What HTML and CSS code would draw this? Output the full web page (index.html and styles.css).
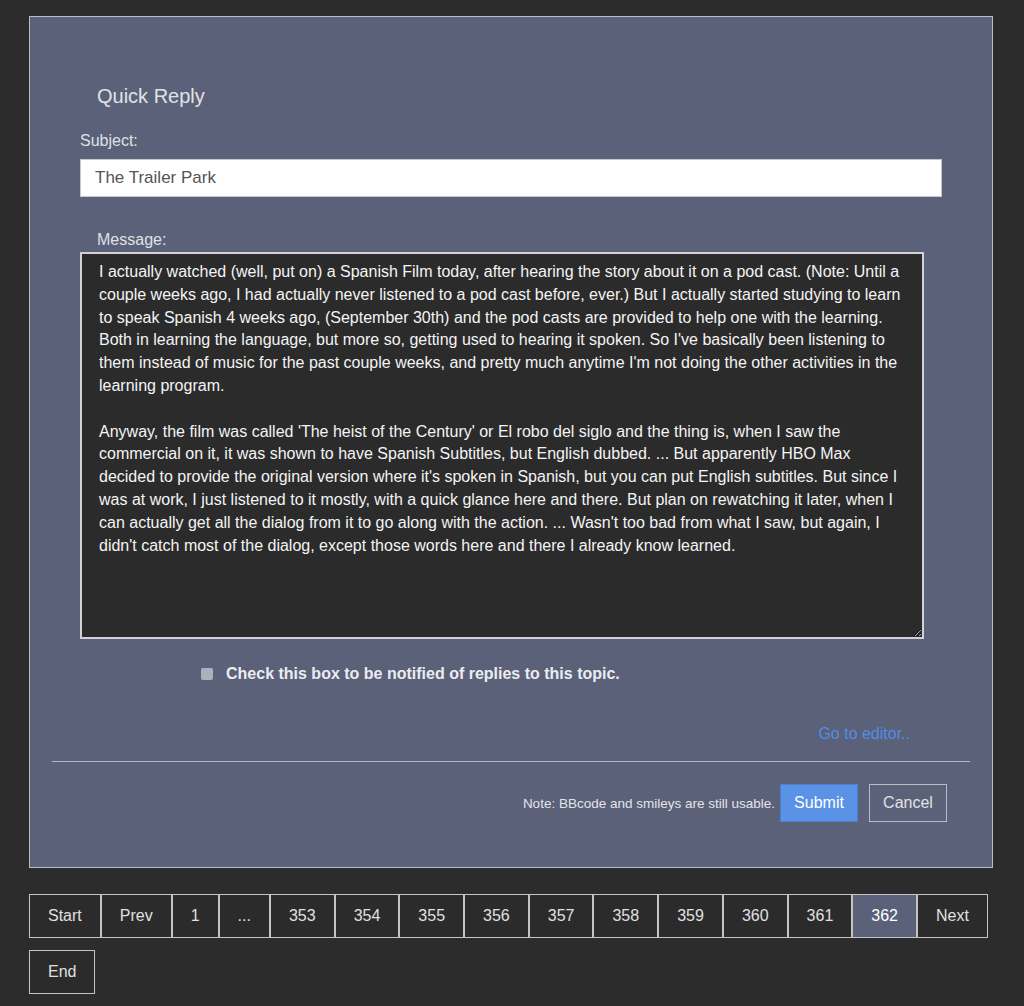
FILE: index.html
```html
<!DOCTYPE html>
<html lang="en">
<head>
  <meta charset="UTF-8">
  <meta name="viewport" content="width=device-width, initial-scale=1.0">
  <title>Quick Reply</title>
  <link rel="stylesheet" href="styles.css">
</head>
<body>
  <form class="reply-panel">
    <h2 class="reply-title">Quick Reply</h2>

    <label class="field-label subject-label" for="subject">Subject:</label>
    <input class="subject-input" id="subject" type="text" value="The Trailer Park">

    <label class="field-label message-label" for="message">Message:</label>
    <textarea class="message-box" id="message">I actually watched (well, put on) a Spanish Film today, after hearing the story about it on a pod cast. (Note: Until a couple weeks ago, I had actually never listened to a pod cast before, ever.) But I actually started studying to learn to speak Spanish 4 weeks ago, (September 30th) and the pod casts are provided to help one with the learning. Both in learning the language, but more so, getting used to hearing it spoken. So I've basically been listening to them instead of music for the past couple weeks, and pretty much anytime I'm not doing the other activities in the learning program.

Anyway, the film was called 'The heist of the Century' or El robo del siglo and the thing is, when I saw the commercial on it, it was shown to have Spanish Subtitles, but English dubbed. ... But apparently HBO Max decided to provide the original version where it's spoken in Spanish, but you can put English subtitles. But since I was at work, I just listened to it mostly, with a quick glance here and there. But plan on rewatching it later, when I can actually get all the dialog from it to go along with the action. ... Wasn't too bad from what I saw, but again, I didn't catch most of the dialog, except those words here and there I already know learned.</textarea>

    <label class="notify-row">
      <input class="notify-check" type="checkbox">
      <span>Check this box to be notified of replies to this topic.</span>
    </label>

    <div class="editor-link-row">
      <a class="editor-link" href="#">Go to editor..</a>
    </div>

    <hr class="divider">

    <div class="form-actions">
      <span class="bbcode-note">Note: BBcode and smileys are still usable.</span>
      <button class="btn btn-submit" type="button">Submit</button>
      <button class="btn btn-cancel" type="button">Cancel</button>
    </div>
  </form>

  <nav class="pagination">
    <a class="page-link" href="#">Start</a>
    <a class="page-link" href="#">Prev</a>
    <a class="page-link" href="#">1</a>
    <a class="page-link" href="#">...</a>
    <a class="page-link" href="#">353</a>
    <a class="page-link" href="#">354</a>
    <a class="page-link" href="#">355</a>
    <a class="page-link" href="#">356</a>
    <a class="page-link" href="#">357</a>
    <a class="page-link" href="#">358</a>
    <a class="page-link" href="#">359</a>
    <a class="page-link" href="#">360</a>
    <a class="page-link" href="#">361</a>
    <a class="page-link current" href="#">362</a>
    <a class="page-link" href="#">Next</a>
    <a class="page-link" href="#">End</a>
  </nav>
</body>
</html>
```

FILE: styles.css
```css
* {
  margin: 0;
  padding: 0;
  box-sizing: border-box;
  font-family: 'Liberation Sans', Helvetica, Arial, sans-serif;
}

body {
  background: #2c2c2c;
  padding: 16px 31px 0 29px;
  min-height: 100vh;
}

.reply-panel {
  display: flex;
  flex-direction: column;
  background: #5a6179;
  border: 1px solid #b9bcc4;
  padding: 67px 22px 45px;
}

.reply-title {
  margin-left: 45px;
  font-size: 20px;
  line-height: 24px;
  font-weight: normal;
  color: #e2e2e6;
}

.field-label {
  font-size: 16px;
  line-height: 18px;
  color: #e0e0e4;
}

.subject-label {
  margin: 24px 0 0 28px;
}

.subject-input {
  margin: 9px 0 0 28px;
  width: 862px;
  height: 38px;
  border: 1px solid #c8c8c8;
  background: #fff;
  padding: 0 14px;
  font-size: 17px;
  color: #555;
  outline: none;
}

.message-label {
  margin: 34px 0 0 45px;
}

.message-box {
  margin: 3px 0 0 28px;
  width: 844px;
  height: 387px;
  background: #2b2b2b;
  border: 2px solid #d2d2d6;
  padding: 7px 12px 6px 17px;
  font-size: 16px;
  line-height: 22.8px;
  color: #f4f4f4;
  outline: none;
}

.notify-row {
  margin: 26px 0 0 149px;
  display: flex;
  align-items: center;
  gap: 13px;
  font-size: 16px;
  line-height: 18px;
  font-weight: bold;
  color: #ececf0;
}

.notify-check {
  appearance: none;
  -webkit-appearance: none;
  width: 12px;
  height: 12px;
  border-radius: 2px;
  background: #aeb1bd;
}

.editor-link-row {
  margin-top: 41px;
  display: flex;
  justify-content: flex-end;
  padding-right: 60px;
}

.editor-link {
  font-size: 16px;
  line-height: 20px;
  color: #4f8de6;
  text-decoration: none;
}

.divider {
  margin-top: 17px;
  border: none;
  border-top: 1px solid #b4b7c1;
}

.form-actions {
  margin-top: 22px;
  display: flex;
  justify-content: flex-end;
  align-items: center;
  padding-right: 23px;
}

.bbcode-note {
  font-size: 13.5px;
  color: #e4e4e8;
  margin-right: 5px;
}

.btn {
  width: 78px;
  height: 38px;
  font-size: 16px;
  cursor: pointer;
}

.btn-submit {
  background: #5a92e6;
  border: 1px solid #4a7fd2;
  color: #fff;
}

.btn-cancel {
  margin-left: 11px;
  background: transparent;
  border: 1px solid #b9bcc4;
  color: #e2e2e6;
}

.pagination {
  margin-top: 26px;
  display: flex;
  flex-wrap: wrap;
  row-gap: 12px;
}

.page-link {
  display: block;
  padding: 11px 18px;
  font-size: 16px;
  line-height: 20px;
  color: #e0e0e0;
  text-decoration: none;
  background: #2b2b2b;
  border: 1px solid #c4c4c4;
}

.page-link.current {
  background: #5a6179;
  color: #fff;
}
```
